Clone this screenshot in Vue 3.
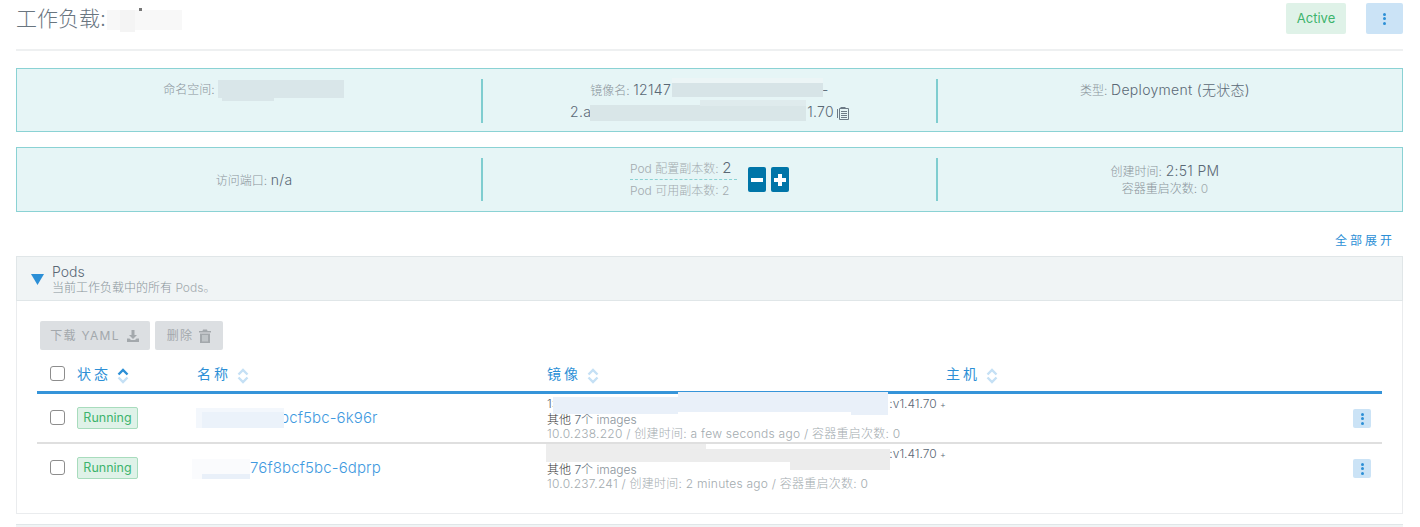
<script setup>
const smudges = [
  { x: 107, y: 10, w: 75, h: 20, c: '#f8f8f8' },
  { x: 120, y: 10, w: 15, h: 22, c: '#f4f4f4' },
  { x: 218, y: 80, w: 126, h: 18, c: '#d9e6e9' },
  { x: 222, y: 98, w: 52, h: 3, c: '#d9e6e9' },
  { x: 672, y: 78, w: 151, h: 6, c: '#ecf5f6' },
  { x: 672, y: 83, w: 151, h: 14, c: '#d7e4e7' },
  { x: 590, y: 105, w: 216, h: 16, c: '#d9e6e8' },
  { x: 700, y: 100, w: 106, h: 6, c: '#dfebed' },
  { x: 196, y: 408, w: 88, h: 20, c: '#f3f7fc' },
  { x: 202, y: 412, w: 82, h: 16, c: '#ebf2fa' },
  { x: 192, y: 459, w: 58, h: 20, c: '#fafbfd' },
  { x: 202, y: 474, w: 48, h: 5, c: '#e9f0f9' },
  { x: 553, y: 397, w: 125, h: 17, c: '#e9f0f9' },
  { x: 678, y: 392, w: 173, h: 20, c: '#e9f0f9' },
  { x: 851, y: 392, w: 37, h: 23, c: '#e9f0f9' },
  { x: 546, y: 444, w: 160, h: 18, c: '#ededed' },
  { x: 690, y: 449, w: 200, h: 13, c: '#ececec' },
  { x: 790, y: 460, w: 100, h: 10, c: '#ececec' },
]
const pods = [
  { name: 'bcf5bc-6k96r', pad: 'pad-a', ip: '10.0.238.220', age: 'a few seconds ago', start: '1:' },
  { name: '76f8bcf5bc-6dprp', pad: 'pad-b', ip: '10.0.237.241', age: '2 minutes ago', start: '' },
]
</script>

<template>
  <div class="page">
    <header class="head">
      <h1 class="title">工作负载:</h1>
      <div class="head-actions">
        <span class="active">Active</span>
        <button class="kebab big"><i></i><i></i><i></i></button>
      </div>
    </header>

    <section class="info first">
      <div class="cell"><div><span class="k">命名空间:</span><span class="gap-c"></span></div></div>
      <div class="cell">
        <div class="image-name">
          <span class="k">镜像名:</span> <span class="v">12147</span><span class="gap-a"></span><span class="v">-</span><br />
          <span class="v">2.a</span><span class="gap-b"></span><span class="v">1.70</span>
          <svg class="copy" viewBox="0 0 12 14" width="12" height="14">
            <path d="M3.500 1h5v2h-5z" fill="#6d7b86" />
            <path d="M2.500 2.500h9v11h-9z" fill="none" stroke="#6d7b86" stroke-width="1" />
            <path d="M4 5.500h6M4 7.500h6M4 9.500h6M4 11.500h6" stroke="#6d7b86" stroke-width="1" />
            <path d="M0.500 3v9" stroke="#6d7b86" stroke-width="1" />
          </svg>
        </div>
      </div>
      <div class="cell"><div><span class="k">类型:</span> <span class="v">Deployment (无状态)</span></div></div>
    </section>

    <section class="info second">
      <div class="cell middle"><div><span class="k">访问端口:</span> <span class="v">n/a</span></div></div>
      <div class="cell middle">
        <div class="scale">
          <div class="scale-text">
            <div class="scale-top"><span class="muted">Pod 配置副本数:</span> <span class="v large">2</span></div>
            <div class="scale-bottom"><span class="muted">Pod 可用副本数: 2</span></div>
          </div>
          <div class="scale-btns">
            <button class="step"><svg viewBox="0 0 18 24" width="18" height="24"><path d="M3 10h12v4H3z" fill="#fff" /></svg></button>
            <button class="step"><svg viewBox="0 0 18 24" width="18" height="24"><path d="M7 6h4v4h4v4h-4v4H7v-4H3v-4h4z" fill="#fff" /></svg></button>
          </div>
        </div>
      </div>
      <div class="cell middle">
        <div class="created">
          <div><span class="k">创建时间:</span> <span class="v">2:51 PM</span></div>
          <div class="restarts"><span class="k">容器重启次数:</span> <span class="muted">0</span></div>
        </div>
      </div>
    </section>

    <div class="expand-row"><a class="expand">全部展开</a></div>

    <section class="accordion">
      <div class="acc-head">
        <svg class="tri" viewBox="0 0 13 11" width="13" height="11"><path d="M0 0h13L6.500 11z" fill="#2c8fd6" /></svg>
        <div>
          <div class="acc-title">Pods</div>
          <div class="acc-sub">当前工作负载中的所有 <span class="muted">Pods。</span></div>
        </div>
      </div>
      <div class="acc-body">
        <div class="bulk">
          <button class="bulk-btn wide">下载 YAML
            <svg viewBox="0 0 14 14" width="14" height="14"><path d="M5.500 1h3v5h2.500L7 10 3 6h2.500z" fill="#a3a8ac" /><path d="M1 9.500h2.500L5 11h4l1.500-1.500H13V13H1z" fill="#a3a8ac" /></svg>
          </button>
          <button class="bulk-btn narrow">删除
            <svg viewBox="0 0 12 14" width="12" height="14"><path d="M4 0.500h4l0.500 1.500H12v1.500H0V2h3.500z" fill="#a3a8ac" /><path d="M1 4.500h10V14H1zM3.500 6v6.500h1V6zM5.500 6v6.500h1V6zM7.500 6v6.500h1V6z" fill="#a3a8ac" fill-rule="evenodd" /></svg>
          </button>
        </div>

        <div class="table">
          <div class="row thead">
            <div><span class="check"></span></div>
            <div class="th">状态
              <svg class="sort" viewBox="0 0 12 16" width="12" height="16"><path d="M1.500 6.500L6 2l4.500 4.500" fill="none" stroke="#2c8fd6" stroke-width="2.400" /><path d="M1.500 9.500L6 14l4.500-4.500" fill="none" stroke="#c5e0f5" stroke-width="2.400" /></svg>
            </div>
            <div class="th">名称
              <svg class="sort" viewBox="0 0 12 16" width="12" height="16"><path d="M1.500 6.500L6 2l4.500 4.500M1.500 9.500L6 14l4.500-4.500" fill="none" stroke="#c5e0f5" stroke-width="2.400" /></svg>
            </div>
            <div class="th">镜像
              <svg class="sort" viewBox="0 0 12 16" width="12" height="16"><path d="M1.500 6.500L6 2l4.500 4.500M1.500 9.500L6 14l4.500-4.500" fill="none" stroke="#c5e0f5" stroke-width="2.400" /></svg>
            </div>
            <div class="th">主机
              <svg class="sort" viewBox="0 0 12 16" width="12" height="16"><path d="M1.500 6.500L6 2l4.500 4.500M1.500 9.500L6 14l4.500-4.500" fill="none" stroke="#c5e0f5" stroke-width="2.400" /></svg>
            </div>
            <div></div>
          </div>

          <div v-for="pod in pods" :key="pod.ip" class="row pod">
            <div><span class="check"></span></div>
            <div><span class="running">Running</span></div>
            <div class="pod-name" :class="pod.pad">{{ pod.name }}</div>
            <div class="img-cell">
              <div class="img-line"><span>{{ pod.start }}</span><span>:v1.41.70 <small>+</small></span></div>
              <div class="img-more"><span class="cn">其他</span> 7个 <span class="gray">images</span></div>
              <div class="img-meta">{{ pod.ip }} / 创建时间: {{ pod.age }} / 容器重启次数: 0</div>
            </div>
            <div></div>
            <div class="act"><button class="kebab"><i></i><i></i><i></i></button></div>
          </div>
        </div>
      </div>
    </section>

    <div class="next-acc"></div>

    <div v-for="(s, i) in smudges" :key="i" class="smudge"
      :style="{ left: s.x + 'px', top: s.y + 'px', width: s.w + 'px', height: s.h + 'px', background: s.c }"></div>
    <div class="dot"></div>
  </div>
</template>

<style>
html, body { margin: 0; overflow: hidden; background: #fff; }
</style>

<style scoped>
.page {
  position: relative;
  width: 1420px;
  height: 527px;
  overflow: hidden;
  box-sizing: border-box;
  padding: 0 17px 0 16px;
  font-family: Inter, "Noto Sans CJK SC", sans-serif;
  font-weight: 300;
  font-size: 13px;
  color: #5a6875;
}
button { font-family: inherit; font-weight: inherit; border: 0; padding: 0; }

.head {
  height: 49px;
  border-bottom: 2px solid #eef0f1;
  display: flex;
  justify-content: space-between;
  align-items: flex-start;
}
.title {
  margin: 6px 0 0;
  font-size: 21px;
  font-weight: 300;
  line-height: 26px;
  color: #69757f;
}
.head-actions { display: flex; gap: 20px; padding-top: 3px; }
.active {
  width: 60px;
  height: 31px;
  background: #dff2e8;
  color: #3db46d;
  border-radius: 2px;
  font-size: 13px;
  font-weight: 400;
  line-height: 31px;
  text-align: center;
}
.kebab {
  width: 18px;
  height: 19px;
  background: #cbe3f6;
  border-radius: 2px;
  display: flex;
  flex-direction: column;
  align-items: center;
  justify-content: center;
  gap: 1.500px;
}
.kebab.big { width: 37px; height: 31px; }
.kebab i { width: 3px; height: 3px; border-radius: 50%; background: #2c8fd6; display: block; }

.info {
  display: grid;
  grid-template-columns: 464px 455px 1fr;
  box-sizing: border-box;
  background: #e6f5f6;
  border: 1px solid #8ad2d4;
}
.first { margin-top: 17px; height: 64px; padding: 10px 0; }
.second { margin-top: 15px; height: 65px; padding: 10px 0; }
.cell {
  display: flex;
  justify-content: center;
  text-align: center;
  line-height: 21px;
  border-left: 2px solid #7fcdd0;
}
.cell:first-child { border-left: 0; padding-left: 10px; }
.cell:last-child { padding-right: 10px; }
.cell.middle { align-items: center; }
.k { color: #8a949b; font-size: 12px; }
.v { color: #5a6875; font-size: 14px; letter-spacing: 0.300px; }
.large { font-size: 15px; }
.muted { color: #a3abaf; font-size: 12px; }
.gap-a { display: inline-block; width: 151px; height: 1px; }
.gap-b { display: inline-block; width: 216px; height: 1px; }
.gap-c { display: inline-block; width: 130px; height: 1px; }
.copy { vertical-align: -3px; margin-left: 3px; }
.image-name { width: 310px; }

.scale { display: flex; align-items: center; gap: 11px; }
.scale-text { width: 107px; text-align: left; line-height: 20px; white-space: nowrap; }
.scale-top { border-bottom: 1px dashed #8ad2d4; height: 21px; }
.scale-bottom { height: 21px; }
.scale-btns { display: flex; gap: 5px; }
.step {
  width: 18px;
  height: 25px;
  background: #0075a8;
  border-radius: 2px;
  display: block;
}
.step svg { display: block; }
.created { line-height: 16px; }

.expand-row { height: 44px; display: flex; justify-content: flex-end; align-items: flex-end; padding-right: 8px; }
.expand { color: #2c8fd6; font-size: 12px; font-weight: 400; letter-spacing: 3px; line-height: 14px; padding-bottom: 8px; }

.accordion { height: 258px; box-sizing: border-box; border: 1px solid #eaecee; }
.acc-head {
  box-sizing: border-box;
  margin: -1px -1px 0;
  background: #f0f4f5;
  border: 1px solid #e0e6e8;
  display: flex;
  align-items: flex-start;
  gap: 8px;
  padding: 7px 0 0 14px;
  height: 45px;
}
.tri { margin-top: 10px; }
.acc-title { color: #5a6875; font-size: 14px; line-height: 16px; }
.acc-sub { color: #8a949b; font-size: 12px; line-height: 14px; margin-top: 1px; }
.acc-body { padding: 20px 20px 0; }
.bulk { display: flex; gap: 5px; padding-left: 3px; }
.bulk-btn {
  height: 29px;
  background: #dcdfe2;
  border-radius: 2px;
  color: #a3a8ac;
  font-size: 12px;
  font-weight: 400;
  letter-spacing: 1.300px;
  line-height: 27px;
  display: flex;
  align-items: center;
  justify-content: center;
  gap: 6px;
}
.wide { width: 110px; }
.narrow { width: 68px; }

.table { margin-top: 7px; }
.row {
  display: grid;
  grid-template-columns: 40px 120px 350px 399px 406px 30px;
}
.thead { height: 37px; box-sizing: border-box; border-bottom: 3px solid #3594d9; }
.pod { height: 50px; box-sizing: border-box; border-bottom: 2px solid #dfdfdf; }
.pod:last-child { border-bottom: 0; }
.check {
  display: block;
  width: 13px;
  height: 13px;
  margin: 9px 0 0 13px;
  border: 1px solid #8d8d8d;
  border-radius: 3px;
  background: #fff;
}
.pod .check { margin-top: 16px; }
.th {
  color: #2c8fd6;
  font-size: 14px;
  font-weight: 400;
  letter-spacing: 3px;
  line-height: 18px;
  padding-top: 8px;
  display: flex;
  align-items: flex-start;
  gap: 6px;
}
.sort { margin-top: 3px; }
.running {
  display: block;
  width: 59px;
  height: 20px;
  margin-top: 13px;
  background: #dff2e8;
  border: 1px solid #a8dcbd;
  border-radius: 2px;
  color: #3db46d;
  font-size: 12.500px;
  font-weight: 400;
  line-height: 20px;
  text-align: center;
}
.pod-name { color: #3f9ae0; font-size: 15px; letter-spacing: 0.130px; line-height: 20px; padding-top: 14px; }
.pad-a { padding-left: 83px; }
.pad-b { padding-left: 53px; }
.img-cell { font-size: 12px; line-height: 14px; padding-top: 3px; white-space: nowrap; width: 399px; }
.img-line { display: flex; justify-content: space-between; color: #5a6875; }
.img-line small { font-size: 9px; }
.img-more { color: #5a6875; margin-top: 1px; }
.cn { color: #333; }
.gray { color: #8a949b; }
.img-meta { color: #a3abaf; line-height: 13px; font-size: 12px; letter-spacing: 0.250px; }
.act { display: flex; padding-top: 15px; margin-left: 1px; }

.next-acc { margin-top: 10px; height: 10px; background: #f0f4f5; border-top: 1px solid #e0e6e8; }

.smudge { position: absolute; }
.dot { position: absolute; left: 139px; top: 8px; width: 3px; height: 3px; background: #777; }
</style>
